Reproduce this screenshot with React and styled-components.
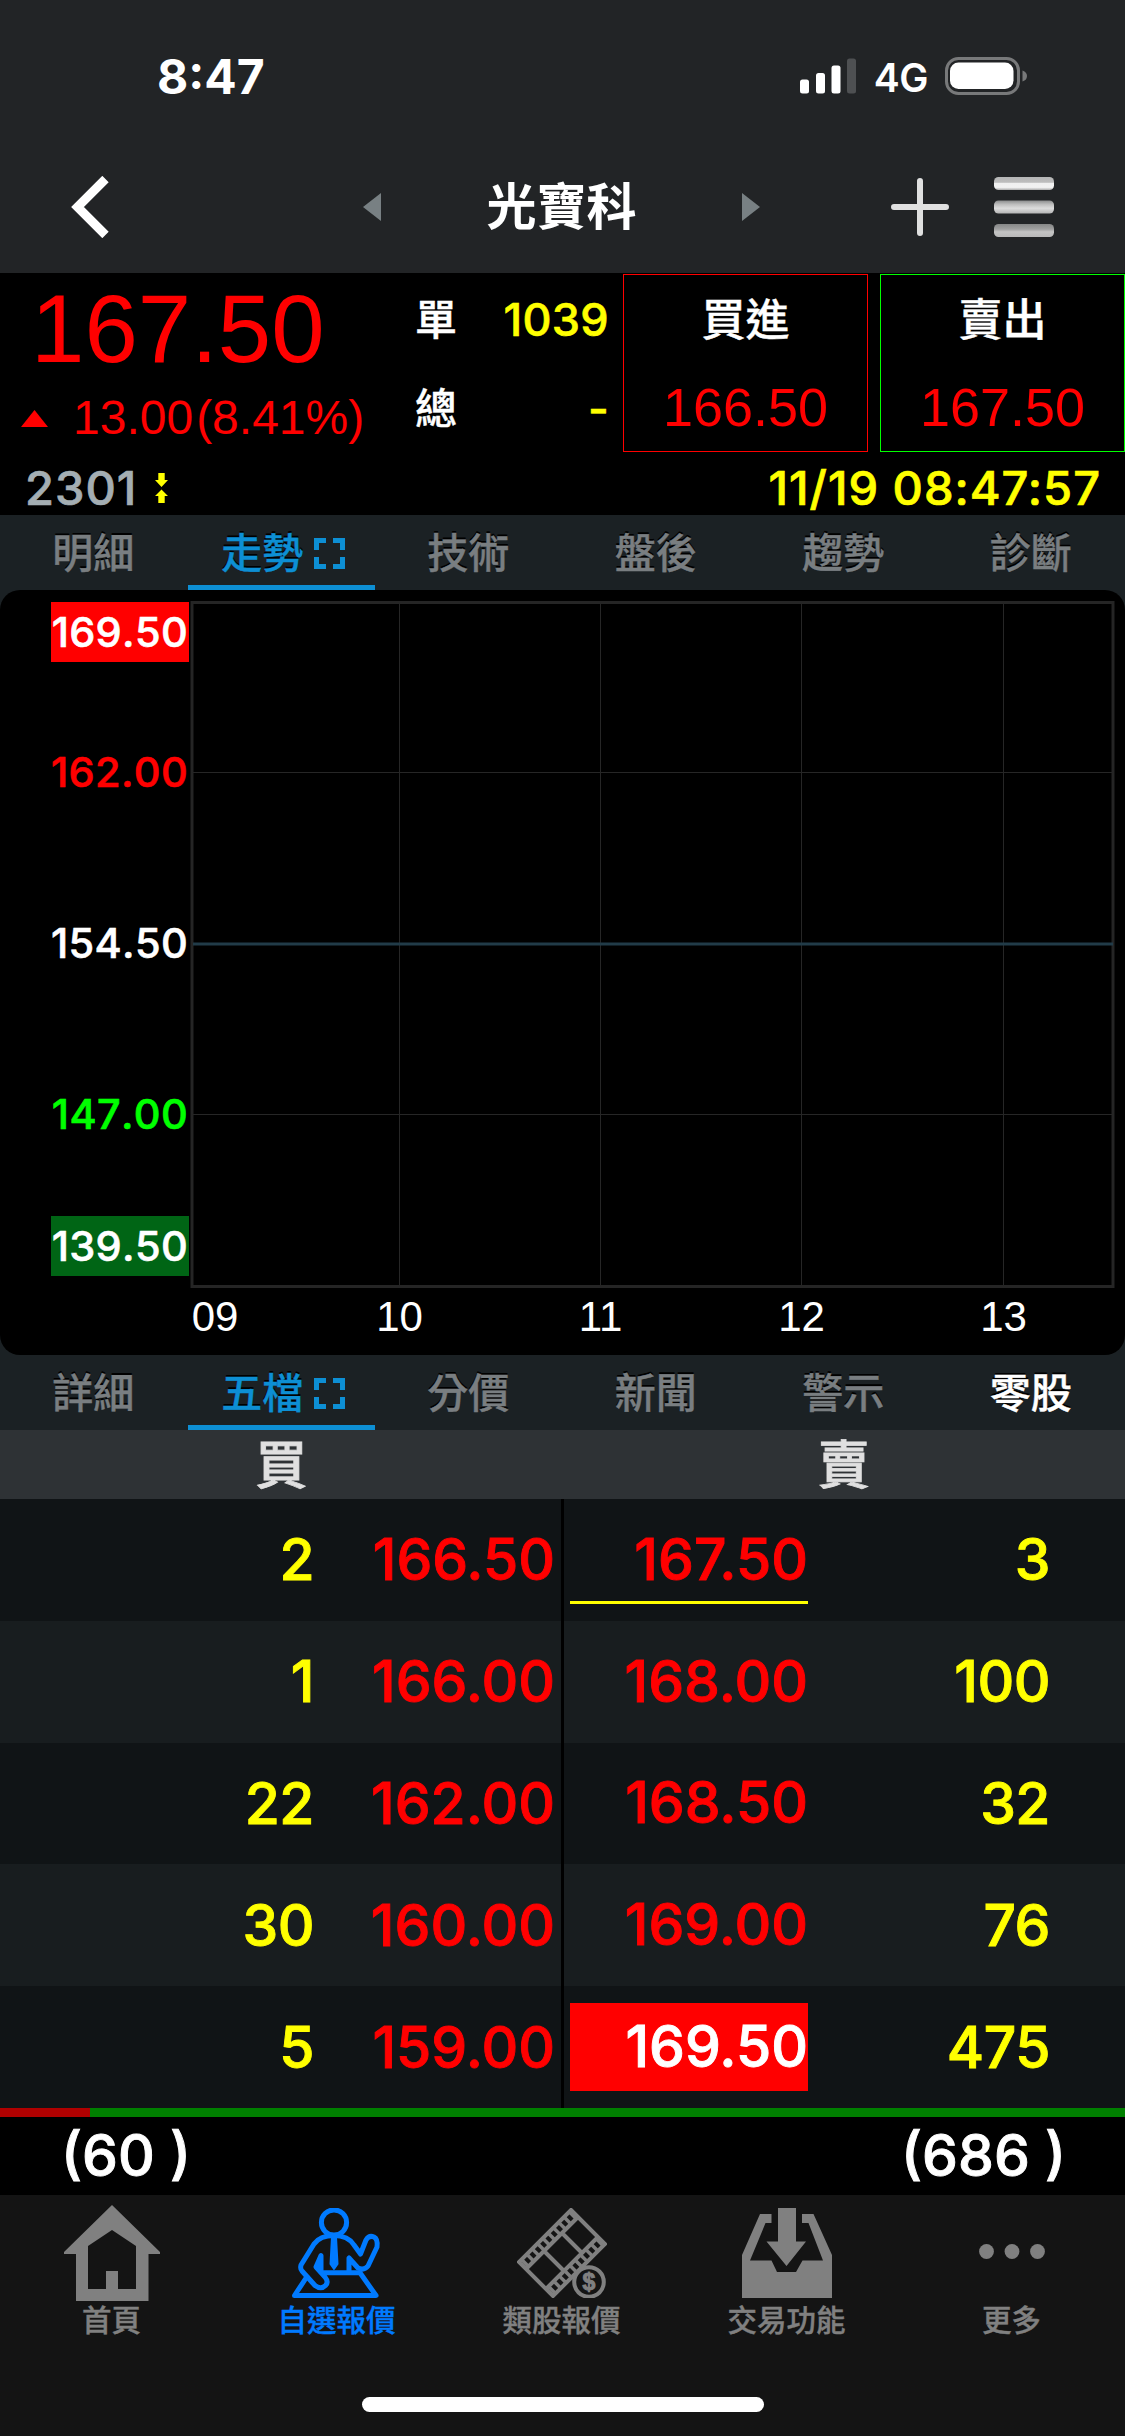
import React from "react";
import styled, { createGlobalStyle } from "styled-components";

const topTabs = ["明細", "走勢", "技術", "盤後", "趨勢", "診斷"];
const bottomTabs = ["詳細", "五檔", "分價", "新聞", "警示", "零股"];

const priceAxis = [
  { label: "169.50", y: 42, bg: "#ff0000", color: "#fff" },
  { label: "162.00", y: 182, color: "#ff0000" },
  { label: "154.50", y: 353.5, color: "#fff" },
  { label: "147.00", y: 524.5, color: "#00ff00" },
  { label: "139.50", y: 656, bg: "#006515", color: "#fff" },
];

const hourAxis = [
  { label: "09", x: 215 },
  { label: "10", x: 399.5 },
  { label: "11", x: 600.5 },
  { label: "12", x: 801.5 },
  { label: "13", x: 1003.5 },
];

const orders = [
  { bidVol: "2", bid: "166.50", ask: "167.50", askVol: "3", deal: true },
  { bidVol: "1", bid: "166.00", ask: "168.00", askVol: "100" },
  { bidVol: "22", bid: "162.00", ask: "168.50", askVol: "32" },
  { bidVol: "30", bid: "160.00", ask: "169.00", askVol: "76" },
  { bidVol: "5", bid: "159.00", ask: "169.50", askVol: "475", limit: true },
];

const SignalIcon = () => (
  <svg width="57" height="36" viewBox="0 0 57 36" fill="#fff">
    <rect x="0" y="21.5" width="9" height="14" rx="2.5" />
    <rect x="16" y="15" width="9" height="20.5" rx="2.5" />
    <rect x="31.5" y="7.5" width="9" height="28" rx="2.5" />
    <rect x="47" y="0.5" width="9" height="35" rx="2.5" fill="#4e5052" />
  </svg>
);

const BatteryIcon = () => (
  <svg width="82" height="38" viewBox="0 0 82 38">
    <rect
      x="1.5"
      y="1.5"
      width="72"
      height="35"
      rx="12"
      fill="none"
      stroke="#78797a"
      strokeWidth="3"
    />
    <rect x="5" y="5.5" width="63.5" height="26.5" rx="8.5" fill="#fff" />
    <path d="M77.5 13.5Q82 15 82 19T77.5 24.5Z" fill="#78797a" />
  </svg>
);

const ExpandIcon = () => (
  <svg width="31" height="31" viewBox="0 0 31 31">
    <path
      d="M2.5 12V2.5H12M19 2.5H28.5V12M28.5 19V28.5H19M12 28.5H2.5V19"
      fill="none"
      stroke="#0d8fd4"
      strokeWidth="5"
    />
  </svg>
);

const MenuIcon = () => (
  <svg width="60" height="60" viewBox="0 0 60 60">
    <defs>
      <linearGradient id="bar" x1="0" y1="0" x2="0" y2="1">
        <stop offset="0" stopColor="#b5b6b6" />
        <stop offset="0.4" stopColor="#bdbdbd" />
        <stop offset="0.5" stopColor="#f0f0f0" />
        <stop offset="0.8" stopColor="#f2f2f2" />
        <stop offset="1" stopColor="#aaa" />
      </linearGradient>
      <linearGradient id="barMid" x1="0" y1="0" x2="0" y2="1">
        <stop offset="0" stopColor="#8c8d8e" />
        <stop offset="0.3" stopColor="#bebebe" />
        <stop offset="0.6" stopColor="#dcdcdc" />
        <stop offset="1" stopColor="#b4b4b4" />
      </linearGradient>
      <linearGradient id="barLow" x1="0" y1="0" x2="0" y2="1">
        <stop offset="0" stopColor="#858686" />
        <stop offset="0.4" stopColor="#a0a0a0" />
        <stop offset="0.6" stopColor="#c4c4c4" />
        <stop offset="1" stopColor="#b9b9b9" />
      </linearGradient>
    </defs>
    <rect y="0" width="60" height="13" rx="4.5" fill="url(#bar)" />
    <rect y="23.5" width="60" height="13" rx="4.5" fill="url(#barMid)" />
    <rect y="47" width="60" height="13" rx="4.5" fill="url(#barLow)" />
  </svg>
);

const HomeIcon = () => (
  <svg width="96" height="96" viewBox="0 0 96 96">
    <path
      fill="#808080"
      fillRule="evenodd"
      d="M48 0L96 47V49H84.5V96H12V49H0V47ZM48 25L24 41V84H42V66H54V84H72V41Z"
    />
  </svg>
);

const WatchlistIcon = () => (
  <svg
    width="90"
    height="90"
    viewBox="0 0 90 90"
    fill="none"
    stroke="#007aff"
    strokeWidth="5"
    strokeLinejoin="round"
  >
    <circle cx="42" cy="14.5" r="12.6" />
    <path d="M42 27.5Q28 27.5 22 36L9 57Q8 61 10 63L23 77.5Q29 82 33.5 77.5Q37 74 33 69L24 59L29 47.5V64.5" />
    <path d="M42 27.5Q56 27.5 62 37L68.5 46L74 32Q77 27 82 29Q86 31 85 39L76 58Q72 63 66 60L57 50V64" />
    <path d="M29 64.8H68L84 87.5H2.5L16 67" />
    <path d="M40 29H44L45.5 56L42 61L38.5 56Z" fill="#007aff" strokeWidth="2" />
  </svg>
);

const SectorIcon = () => (
  <svg
    width="90"
    height="90"
    viewBox="0 0 90 90"
    fill="none"
    stroke="#808080"
    strokeWidth="4"
  >
    <path d="M54 2L88 36L36 88L2 54Z" />
    <path d="M61 9L9 61M81 29L29 81M45 25L65 45M27 43L47 63" />
    <g strokeWidth="7" strokeDasharray="3.5 4">
      <path d="M57 6L6 57M84 33L33 84" />
    </g>
    <circle cx="72" cy="74" r="14.8" fill="#141414" />
    <text
      x="72"
      y="82"
      fontSize="23"
      fontWeight="700"
      fontFamily="Liberation Sans, sans-serif"
      textAnchor="middle"
      fill="#808080"
      strokeWidth="1"
    >
      $
    </text>
  </svg>
);

const TradeIcon = () => (
  <svg width="90" height="90" viewBox="0 0 90 90" fill="#808080">
    <path d="M18 6H29.5V15H23.5L8 52.5H29.5L35 64H54L60.5 52.5H81L66.5 15H60V6H71.5L90 47V90H0V47Z" />
    <path d="M36 0H54V33.5H64L44.5 58L24.5 33.5H36Z" />
  </svg>
);

const MoreIcon = () => (
  <svg width="68" height="90" viewBox="0 0 68 90" fill="#808080">
    <circle cx="8.5" cy="43.5" r="7.4" />
    <circle cx="34" cy="43.5" r="7.4" />
    <circle cx="59.5" cy="43.5" r="7.4" />
  </svg>
);

const TrendChart = () => (
  <svg width="1125" height="765" viewBox="0 0 1125 765">
    <rect width="1125" height="765" rx="20" fill="#000" />
    <g stroke="#262626" strokeWidth="1">
      <path d="M193 182.5H1113M193 524.5H1113" />
      {hourAxis.slice(1).map(({ label, x }) => (
        <line
          key={label}
          x1={Math.floor(x) + 0.5}
          x2={Math.floor(x) + 0.5}
          y1="12"
          y2="696"
        />
      ))}
    </g>
    <rect
      x="192"
      y="12.5"
      width="921"
      height="684"
      fill="none"
      stroke="#252525"
      strokeWidth="3"
    />
    <line x1="193" x2="1113" y1="354" y2="354" stroke="#213b48" strokeWidth="3" />
    {priceAxis.map(({ label, y, bg, color }) => (
      <g key={label}>
        {bg && <rect x="51" y={y - 30} width="138" height="60" fill={bg} />}
        <AxisText x="188" y={y + 14.5} textAnchor="end" fill={color} stroke={color}>
          {label}
        </AxisText>
      </g>
    ))}
    {hourAxis.map(({ label, x }) => (
      <HourText key={label} x={x} y="741" textAnchor="middle">
        {label}
      </HourText>
    ))}
  </svg>
);

const Tabs = ({ items, active, highlight }) => (
  <TabBar>
    {items.map((item) => (
      <Tab key={item} $active={item === active} $bright={item === highlight}>
        {item}
        {item === active && <ExpandIcon />}
      </Tab>
    ))}
  </TabBar>
);

const App = () => {
  return (
    <Screen>
      <GlobalStyle />
      <Header>
        <StatusBar>
          <Time>8:47</Time>
          <StatusIcons>
            <SignalIcon />
            <Network>4G</Network>
            <BatteryIcon />
          </StatusIcons>
        </StatusBar>
        <NavBar>
          <svg width="40" height="62" viewBox="0 0 40 62">
            <path
              d="M34.5 3L6.5 31L34.5 59"
              fill="none"
              stroke="#fff"
              strokeWidth="9"
            />
          </svg>
          <TitleGroup>
            <svg width="18" height="28" viewBox="0 0 18 28">
              <path d="M18 0V28L0 14Z" fill="#788083" />
            </svg>
            <Title>光寶科</Title>
            <svg width="18" height="28" viewBox="0 0 18 28">
              <path d="M0 0V28L18 14Z" fill="#788083" />
            </svg>
          </TitleGroup>
          <Actions>
            <svg width="58" height="58" viewBox="0 0 58 58">
              <path
                d="M29 3V55M3 29H55"
                stroke="#e0e0e0"
                strokeWidth="6"
                strokeLinecap="round"
              />
            </svg>
            <MenuIcon />
          </Actions>
        </NavBar>
      </Header>

      <Quote>
        <Summary>
          <LastPrice>167.50</LastPrice>
          <Change>
            <svg width="27" height="17" viewBox="0 0 27 17">
              <path d="M13.5 0L27 17H0Z" fill="#ff0000" />
            </svg>
            <span>13.00</span>
            <span>(8.41%)</span>
          </Change>
        </Summary>
        <Volumes>
          <VolumeRow $height={94}>
            <span>單</span>
            <VolumeValue>1039</VolumeValue>
          </VolumeRow>
          <VolumeRow $height={84}>
            <span>總</span>
            <VolumeValue>-</VolumeValue>
          </VolumeRow>
        </Volumes>
        <TradeBoxes>
          <TradeBox $color="#ff0000">
            <TradeLabel>買進</TradeLabel>
            <TradePrice>166.50</TradePrice>
          </TradeBox>
          <TradeBox $color="#00ff00">
            <TradeLabel>賣出</TradeLabel>
            <TradePrice>167.50</TradePrice>
          </TradeBox>
        </TradeBoxes>
      </Quote>
      <InfoRow>
        <Symbol>2301</Symbol>
        <svg width="13" height="30" viewBox="0 0 13 30" fill="#ffff00">
          <path d="M3.3 0H9.7V7H13L6.5 14L0 7H3.3ZM3.3 30H9.7V23H13L6.5 16.5L0 23H3.3Z" />
        </svg>
        <Timestamp>11/19 08:47:57</Timestamp>
      </InfoRow>

      <Tabs items={topTabs} active="走勢" />
      <ChartPanel>
        <TrendChart />
      </ChartPanel>
      <Tabs items={bottomTabs} active="五檔" highlight="零股" />

      <BookHeader>
        <span>買</span>
        <span>賣</span>
      </BookHeader>
      <Book>
        {orders.map((order) => (
          <OrderRow key={order.bid}>
            <BidSide>
              <Volume>{order.bidVol}</Volume>
              <Price>{order.bid}</Price>
            </BidSide>
            <AskSide>
              <AskPrice $deal={order.deal} $limit={order.limit}>
                {order.ask}
              </AskPrice>
              <Volume>{order.askVol}</Volume>
            </AskSide>
          </OrderRow>
        ))}
      </Book>
      <Ratio>
        <RatioBid style={{ width: `${(60 / (60 + 686)) * 100}%` }} />
      </Ratio>
      <Totals>
        <span>(60 )</span>
        <span>(686 )</span>
      </Totals>

      <Footer>
        <FooterNav>
          <FooterItem>
            <IconSlot>
              <HomeIcon />
            </IconSlot>
            首頁
          </FooterItem>
          <FooterItem $active>
            <IconSlot>
              <WatchlistIcon />
            </IconSlot>
            自選報價
          </FooterItem>
          <FooterItem>
            <IconSlot>
              <SectorIcon />
            </IconSlot>
            類股報價
          </FooterItem>
          <FooterItem>
            <IconSlot>
              <TradeIcon />
            </IconSlot>
            交易功能
          </FooterItem>
          <FooterItem>
            <IconSlot>
              <MoreIcon />
            </IconSlot>
            更多
          </FooterItem>
        </FooterNav>
        <HomeIndicator />
      </Footer>
    </Screen>
  );
};

const GlobalStyle = createGlobalStyle`
  * {
    box-sizing: border-box;
  }

  body {
    margin: 0;
    background: #000;
  }

  svg {
    display: block;
    flex-shrink: 0;
  }
`;

const Screen = styled.div`
  width: 1125px;
  height: 2436px;
  display: flex;
  flex-direction: column;
  overflow: hidden;
  background: #000;
  color: #fff;
  font-family: Inter, "Noto Sans CJK TC", sans-serif;
  font-weight: 500;
`;

const Header = styled.header`
  height: 273px;
  background: #222426;
`;

const StatusBar = styled.div`
  height: 154px;
  padding: 0 98px 0 157px;
  display: flex;
  align-items: center;
  justify-content: space-between;
`;

const Time = styled.div`
  padding-bottom: 1px;
  font-size: 48px;
  font-weight: 700;
`;

const StatusIcons = styled.div`
  display: flex;
  align-items: center;
  gap: 17px;
  padding-bottom: 2px;
`;

const Network = styled.div`
  padding-top: 3px;
  font-size: 39px;
  font-weight: 600;
  letter-spacing: -0.5px;
`;

const NavBar = styled.nav`
  height: 106px;
  padding: 0 71px 1px 71px;
  display: flex;
  align-items: center;
  justify-content: space-between;
`;

const TitleGroup = styled.div`
  display: flex;
  align-items: center;
  justify-content: space-between;
  width: 397px;
  margin-left: 121px;
`;

const Title = styled.h1`
  margin: 0;
  font-size: 50px;
  font-weight: 700;
  line-height: 60px;
`;

const Actions = styled.div`
  display: flex;
  align-items: center;
  gap: 45px;
`;

const Quote = styled.section`
  display: flex;
  height: 182px;
`;

const Summary = styled.div`
  width: 415px;
  flex-shrink: 0;
  color: #ff0000;
  font-family: "Liberation Sans", sans-serif;
  font-weight: 400;
`;

const LastPrice = styled.div`
  padding-left: 31px;
  font-size: 96px;
  line-height: 112px;
`;

const Change = styled.div`
  display: flex;
  align-items: center;
  padding-left: 21px;
  font-size: 48px;
  line-height: 66px;

  span:nth-of-type(1) {
    margin: 0 3px 0 25px;
  }
`;

const Volumes = styled.div`
  width: 194px;
  flex-shrink: 0;
`;

const VolumeRow = styled.div`
  display: flex;
  justify-content: space-between;
  font-size: 42px;
  line-height: ${({ $height }) => $height}px;
  -webkit-text-stroke: 0.4px currentColor;
`;

const VolumeValue = styled.span`
  color: #ffff00;
  font-size: 45px;
  letter-spacing: 0.3px;
  -webkit-text-stroke: 0.6px #ffff00;
`;

const TradeBoxes = styled.div`
  display: grid;
  grid-template-columns: 245px 245px;
  gap: 12px;
  height: 178px;
  margin: 1px 0 0 14px;
`;

const TradeBox = styled.div`
  border: 1px solid ${({ $color }) => $color};
  text-align: center;
`;

const TradeLabel = styled.div`
  font-size: 44px;
  line-height: 90px;
  -webkit-text-stroke: 0.4px currentColor;
`;

const TradePrice = styled.div`
  color: #ff0000;
  font-family: "Liberation Sans", sans-serif;
  font-size: 54px;
  font-weight: 400;
  line-height: 84px;
`;

const InfoRow = styled.div`
  height: 60px;
  padding: 6px 24px 0 25px;
  display: flex;
  align-items: center;
  font-size: 47px;
  line-height: 54px;
  letter-spacing: 1px;
  -webkit-text-stroke: 0.7px currentColor;
`;

const Symbol = styled.span`
  width: 130px;
  color: #a4aeb3;
`;

const Timestamp = styled.span`
  margin-left: auto;
  color: #ffff00;
  -webkit-text-stroke: 0.7px #ffff00;
`;

const TabBar = styled.div`
  display: grid;
  grid-template-columns: repeat(6, 1fr);
  height: 75px;
  background: #1b2124;
`;

const Tab = styled.div`
  display: flex;
  align-items: center;
  justify-content: center;
  gap: 11px;
  height: 75px;
  padding: ${({ $active }) => ($active ? "5px 0 0 4px" : "5px 1px 0 0")};
  border-bottom: 5px solid ${({ $active }) => ($active ? "#0d8fd4" : "transparent")};
  color: ${({ $active, $bright }) =>
    $active ? "#0d8fd4" : $bright ? "#fff" : "#797e81"};
  font-size: 41px;
  line-height: 60px;
  text-shadow: 0 -2px 0 #000;
  -webkit-text-stroke: 0.4px currentColor;

  svg {
    margin-top: 1px;
  }
`;

const ChartPanel = styled.div`
  height: 765px;
  background: #1b2124;
`;

const AxisText = styled.text`
  font-size: 41.5px;
  font-kerning: none;
  letter-spacing: 0.3px;
  stroke-width: 0.6px;
`;

const HourText = styled.text`
  fill: #fff;
  font-family: "Liberation Sans", sans-serif;
  font-size: 42px;
  font-weight: 400;
`;

const BookHeader = styled.div`
  display: grid;
  grid-template-columns: 1fr 1fr;
  height: 69px;
  background: #2e3235;
  color: #e0e0e0;
  font-size: 52px;
  line-height: 72px;
  text-align: center;
  -webkit-text-stroke: 0.8px currentColor;
`;

const Book = styled.div`
  height: 609px;
  display: grid;
  grid-template-rows: repeat(5, 1fr);
`;

const OrderRow = styled.div`
  display: grid;
  grid-template-columns: 561px 561px;
  gap: 3px;
  font-size: 57px;
  -webkit-text-stroke-width: 0.9px;

  & > div {
    background: #101416;
  }

  &:nth-child(even) > div {
    background: #181d1f;
  }
`;

const BidSide = styled.div`
  display: flex;
  align-items: center;
  justify-content: flex-end;
  padding-right: 6px;
`;

const AskSide = styled.div`
  display: flex;
  align-items: center;
  justify-content: space-between;
  padding: 0 75px 0 6px;
`;

const Volume = styled.span`
  color: #ffff00;
  letter-spacing: -0.5px;
`;

const Price = styled.span`
  width: 241px;
  color: #ff0000;
  text-align: right;
`;

const AskPrice = styled(Price)`
  width: 238px;
  height: 88px;
  line-height: 88px;
  color: ${({ $limit }) => ($limit ? "#fff" : "#ff0000")};
  background: ${({ $limit }) => ($limit ? "#ff0000" : "none")};
  box-shadow: ${({ $deal }) => ($deal ? "inset 0 -3px 0 #ffff00" : "none")};
`;

const Ratio = styled.div`
  height: 9px;
  background: #008000;
`;

const RatioBid = styled.div`
  height: 100%;
  background: #b00000;
`;

const Totals = styled.div`
  display: flex;
  justify-content: space-between;
  height: 78px;
  padding: 0 59px 0 61px;
  font-size: 57px;
  line-height: 77px;
  -webkit-text-stroke: 0.9px currentColor;
`;

const Footer = styled.footer`
  flex: 1;
  padding: 10px 0 24px;
  display: flex;
  flex-direction: column;
  align-items: center;
  justify-content: space-between;
  background: #141414;
`;

const FooterNav = styled.div`
  display: grid;
  grid-template-columns: repeat(5, 225px);
  margin-right: 2px;
`;

const FooterItem = styled.div`
  display: flex;
  flex-direction: column;
  align-items: center;
  color: ${({ $active }) => ($active ? "#007aff" : "#808080")};
  font-size: 29.5px;
  line-height: 38px;
  -webkit-text-stroke: 0.4px currentColor;

  svg {
    -webkit-text-stroke: 0;
  }
`;

const IconSlot = styled.div`
  display: flex;
  align-items: center;
  height: 96px;
`;

const HomeIndicator = styled.div`
  width: 402px;
  height: 15px;
  border-radius: 8px;
  background: #fff;
`;

export default App;
